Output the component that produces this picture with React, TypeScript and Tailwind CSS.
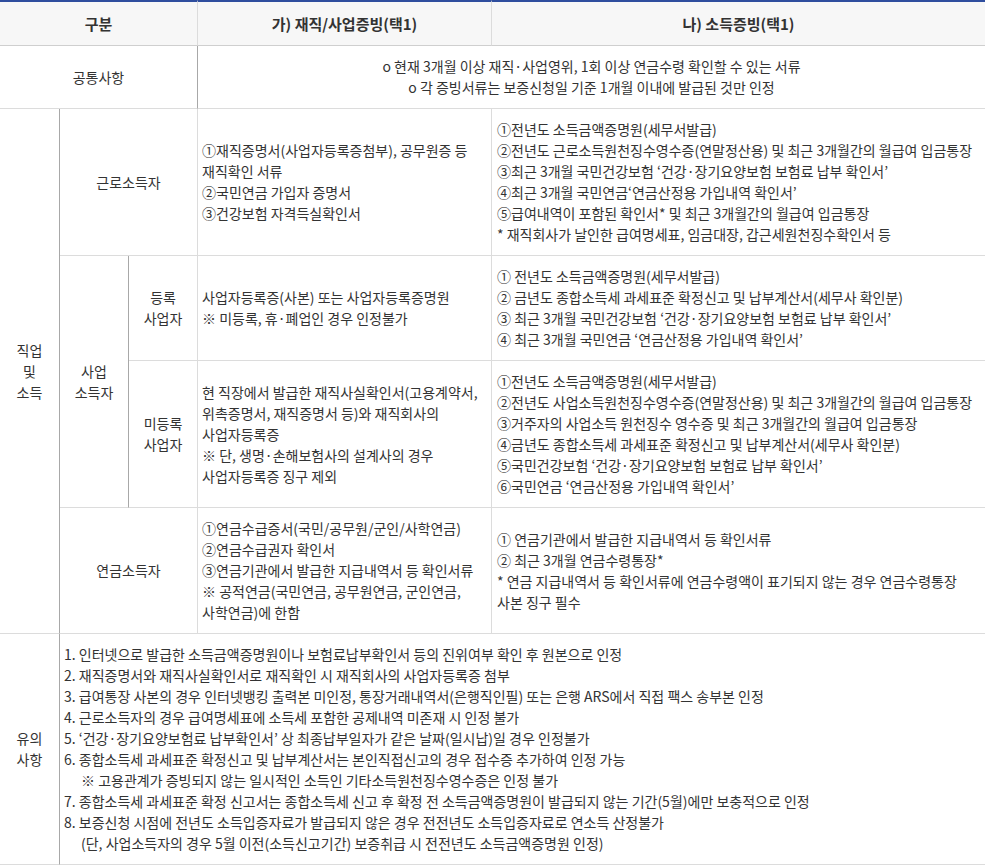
import React from "react";

const Lines = ({ lines, className = "" }: { lines: string[]; className?: string }) => (
  <div className={className}>
    {lines.map((l, i) => (
      <div key={i} className="whitespace-nowrap">
        {l}
      </div>
    ))}
  </div>
);

const light = "border-[#dcdcdc]";

export default function App() {
  const td = `border-b border-r ${light} py-[10px] align-middle`;
  const tdDarkR = `border-b border-r border-b-[#dcdcdc] border-r-[#a8a8a8] py-[10px] align-middle`;
  const th = "border-t-2 border-t-[#2f4e9e] border-b border-b-[#cfcfcf] py-[11px] text-[15px] font-bold text-center";
  return (
    <div className="bg-white w-[987px] h-[868px] font-['Noto_Sans_CJK_KR','Noto_Sans',sans-serif] text-[14px] leading-[21px] text-[#333]">
      <table className="w-[985px] table-fixed border-separate border-spacing-0">
        <colgroup>
          <col className="w-[60px]" />
          <col className="w-[69px]" />
          <col className="w-[69px]" />
          <col className="w-[294px]" />
          <col className="w-[493px]" />
        </colgroup>
        <thead>
          <tr className="bg-[#f7f7f7]">
            <th colSpan={3} className={`${th} border-r border-r-[#dcdcdc]`}>
              구분
            </th>
            <th className={`${th} border-r border-r-[#dcdcdc]`}>
              가) 재직/사업증빙(택1)
            </th>
            <th className={th}>
              나) 소득증빙(택1)
            </th>
          </tr>
        </thead>
        <tbody>
          <tr>
            <td colSpan={3} className={`${tdDarkR} text-center`}>
              공통사항
            </td>
            <td colSpan={2} className={`border-b ${light} py-[10px] text-center`}>
              <div>o 현재 3개월 이상 재직·사업영위, 1회 이상 연금수령 확인할 수 있는 서류</div>
              <div>o 각 증빙서류는 보증신청일 기준 1개월 이내에 발급된 것만 인정</div>
            </td>
          </tr>
          <tr>
            <td rowSpan={4} className={`${tdDarkR} text-center`}>
              <div>직업</div>
              <div>및</div>
              <div>소득</div>
            </td>
            <td colSpan={2} className={`${td} text-center`}>
              근로소득자
            </td>
            <td className={`${td} pl-[4px]`}>
              <Lines
                lines={[
                  "①재직증명서(사업자등록증첨부), 공무원증 등",
                  "재직확인 서류",
                  "②국민연금 가입자 증명서",
                  "③건강보험 자격득실확인서",
                ]}
              />
            </td>
            <td className={`border-b ${light} py-[10px] pl-[5px] align-middle`}>
              <Lines
                lines={[
                  "①전년도 소득금액증명원(세무서발급)",
                  "②전년도 근로소득원천징수영수증(연말정산용) 및 최근 3개월간의 월급여 입금통장",
                  "③최근 3개월 국민건강보험 ‘건강·장기요양보험 보험료 납부 확인서’",
                  "④최근 3개월 국민연금‘연금산정용 가입내역 확인서’",
                  "⑤급여내역이 포함된 확인서* 및 최근 3개월간의 월급여 입금통장",
                  "* 재직회사가 날인한 급여명세표, 임금대장, 갑근세원천징수확인서 등",
                ]}
              />
            </td>
          </tr>
          <tr>
            <td rowSpan={2} className={`${tdDarkR} text-center`}>
              <div>사업</div>
              <div>소득자</div>
            </td>
            <td className={`${td} text-center`}>
              <div>등록</div>
              <div>사업자</div>
            </td>
            <td className={`${td} pl-[4px]`}>
              <Lines
                lines={["사업자등록증(사본) 또는 사업자등록증명원", "※ 미등록, 휴·폐업인 경우 인정불가"]}
              />
            </td>
            <td className={`border-b ${light} py-[10px] pl-[5px] align-middle`}>
              <Lines
                lines={[
                  "① 전년도 소득금액증명원(세무서발급)",
                  "② 금년도 종합소득세 과세표준 확정신고 및 납부계산서(세무사 확인분)",
                  "③ 최근 3개월 국민건강보험 ‘건강·장기요양보험 보험료 납부 확인서’",
                  "④ 최근 3개월 국민연금 ‘연금산정용 가입내역 확인서’",
                ]}
              />
            </td>
          </tr>
          <tr>
            <td className={`${td} text-center`}>
              <div>미등록</div>
              <div>사업자</div>
            </td>
            <td className={`${td} pl-[4px]`}>
              <Lines
                lines={[
                  "현 직장에서 발급한 재직사실확인서(고용계약서,",
                  "위촉증명서, 재직증명서 등)와 재직회사의",
                  "사업자등록증",
                  "※ 단, 생명·손해보험사의 설계사의 경우",
                  "사업자등록증 징구 제외",
                ]}
              />
            </td>
            <td className={`border-b ${light} py-[10px] pl-[5px] align-middle`}>
              <Lines
                lines={[
                  "①전년도 소득금액증명원(세무서발급)",
                  "②전년도 사업소득원천징수영수증(연말정산용) 및 최근 3개월간의 월급여 입금통장",
                  "③거주자의 사업소득 원천징수 영수증 및 최근 3개월간의 월급여 입금통장",
                  "④금년도 종합소득세 과세표준 확정신고 및 납부계산서(세무사 확인분)",
                  "⑤국민건강보험 ‘건강·장기요양보험 보험료 납부 확인서’",
                  "⑥국민연금 ‘연금산정용 가입내역 확인서’",
                ]}
              />
            </td>
          </tr>
          <tr>
            <td colSpan={2} className={`${td} text-center`}>
              연금소득자
            </td>
            <td className={`${td} pl-[4px]`}>
              <Lines
                lines={[
                  "①연금수급증서(국민/공무원/군인/사학연금)",
                  "②연금수급권자 확인서",
                  "③연금기관에서 발급한 지급내역서 등 확인서류",
                  "※ 공적연금(국민연금, 공무원연금, 군인연금,",
                  "사학연금)에 한함",
                ]}
              />
            </td>
            <td className={`border-b ${light} py-[10px] pl-[5px] align-middle`}>
              <Lines
                lines={[
                  "① 연금기관에서 발급한 지급내역서 등 확인서류",
                  "② 최근 3개월 연금수령통장*",
                  "* 연금 지급내역서 등 확인서류에 연금수령액이 표기되지 않는 경우 연금수령통장",
                  "사본 징구 필수",
                ]}
              />
            </td>
          </tr>
          <tr>
            <td className={`${tdDarkR} text-center`}>
              <div>유의</div>
              <div>사항</div>
            </td>
            <td colSpan={4} className={`border-b ${light} py-[10px] pl-[4px] align-middle`}>
              <div className="whitespace-nowrap">1. 인터넷으로 발급한 소득금액증명원이나 보험료납부확인서 등의 진위여부 확인 후 원본으로 인정</div>
              <div className="whitespace-nowrap">2. 재직증명서와 재직사실확인서로 재직확인 시 재직회사의 사업자등록증 첨부</div>
              <div className="whitespace-nowrap">3. 급여통장 사본의 경우 인터넷뱅킹 출력본 미인정, 통장거래내역서(은행직인필) 또는 은행 ARS에서 직접 팩스 송부본 인정</div>
              <div className="whitespace-nowrap">4. 근로소득자의 경우 급여명세표에 소득세 포함한 공제내역 미존재 시 인정 불가</div>
              <div className="whitespace-nowrap">5. ‘건강·장기요양보험료 납부확인서’ 상 최종납부일자가 같은 날짜(일시납)일 경우 인정불가</div>
              <div className="whitespace-nowrap">6. 종합소득세 과세표준 확정신고 및 납부계산서는 본인직접신고의 경우 접수증 추가하여 인정 가능</div>
              <div className="whitespace-nowrap pl-[17px]">※ 고용관계가 증빙되지 않는 일시적인 소득인 기타소득원천징수영수증은 인정 불가</div>
              <div className="whitespace-nowrap">7. 종합소득세 과세표준 확정 신고서는 종합소득세 신고 후 확정 전 소득금액증명원이 발급되지 않는 기간(5월)에만 보충적으로 인정</div>
              <div className="whitespace-nowrap">8. 보증신청 시점에 전년도 소득입증자료가 발급되지 않은 경우 전전년도 소득입증자료로 연소득 산정불가</div>
              <div className="whitespace-nowrap pl-[17px]">(단, 사업소득자의 경우 5월 이전(소득신고기간) 보증취급 시 전전년도 소득금액증명원 인정)</div>
            </td>
          </tr>
        </tbody>
      </table>
    </div>
  );
}
